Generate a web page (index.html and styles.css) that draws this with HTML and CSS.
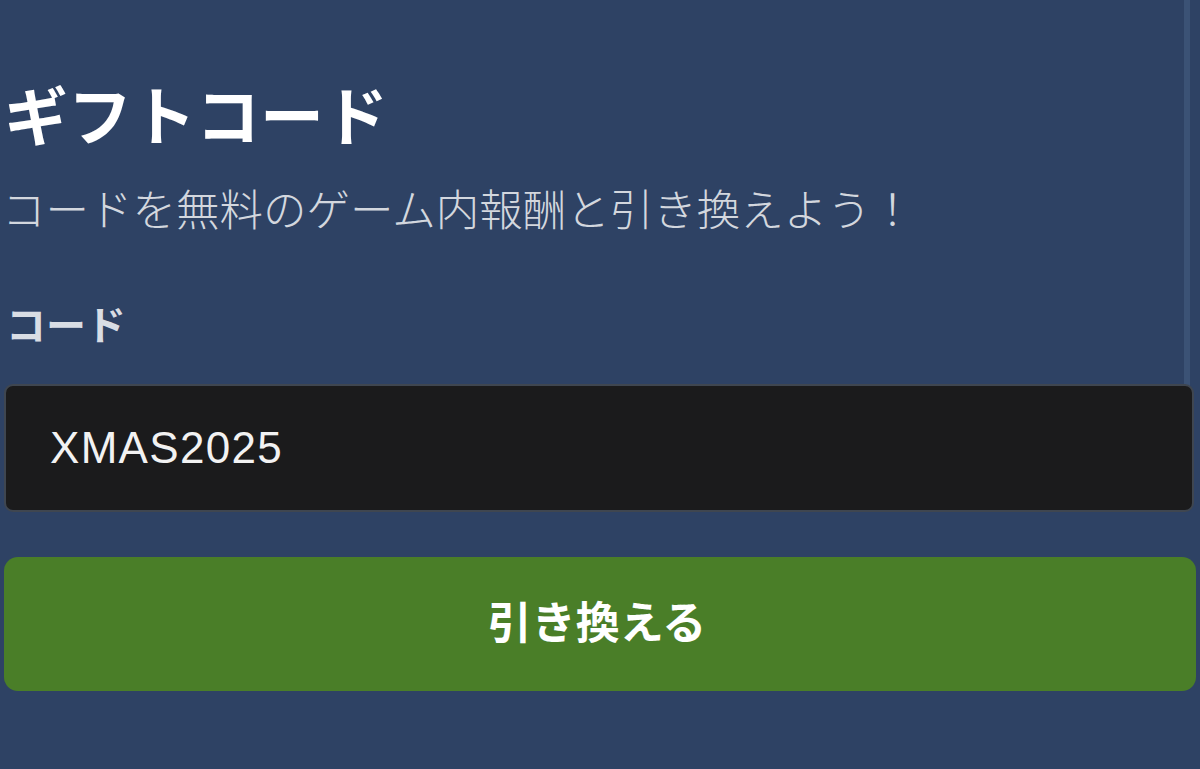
FILE: index.html
```html
<!DOCTYPE html>
<html lang="ja">
<head>
<meta charset="utf-8">
<title>ギフトコード</title>
<link rel="stylesheet" href="styles.css">
</head>
<body>
<div class="scroll-track"></div>
<main class="page">
  <h1 class="title">ギフトコード</h1>
  <p class="subtitle">コードを無料のゲーム内報酬と引き換えよう！</p>
  <label class="label" for="code">コード</label>
  <div class="input-box"><input id="code" class="input" type="text" value="XMAS2025"></div>
  <button class="redeem" type="button">引き換える</button>
</main>
</body>
</html>
```

FILE: styles.css
```css
html, body {
  margin: 0;
  padding: 0;
  background: #2e4264;
  height: 100%;
  overflow: hidden;
}
body {
  font-family: "Noto Sans CJK JP", "Noto Sans", sans-serif;
  position: relative;
}
.scroll-track {
  position: absolute;
  top: 0;
  left: 1184px;
  width: 6px;
  height: 470px;
  background: #3b5275;
}
.page {
  display: flex;
  flex-direction: column;
  padding: 80px 6px 0 4px;
}
.title {
  margin: 0;
  font-size: 64px;
  line-height: 1;
  font-weight: 700;
  color: #ffffff;
}
.subtitle {
  margin: 42px 0 0 -2px;
  font-size: 43.5px;
  line-height: 1;
  font-weight: 300;
  color: #d3d7de;
}
.label {
  margin: 73px 0 0 2px;
  font-size: 40px;
  line-height: 1;
  font-weight: 700;
  color: #d9dde4;
}
.input-box {
  margin-top: 41px;
  position: relative;
  z-index: 1;
}
.input {
  box-sizing: border-box;
  width: 100%;
  height: 128px;
  margin: 0;
  padding: 0 0 0 44px;
  background: #1b1b1c;
  border: 2px solid #3f4650;
  border-radius: 9px;
  color: #f2f2f2;
  font-family: "Liberation Sans", "DejaVu Sans", sans-serif;
  font-size: 44px;
  letter-spacing: 1.3px;
  outline: none;
}
.redeem {
  margin-top: 45px;
  margin-right: -2px;
  height: 134px;
  border: none;
  border-radius: 14px;
  background: #4a7e28;
  color: #ffffff;
  font-family: "Noto Sans CJK JP", "Noto Sans", sans-serif;
  font-size: 44px;
  font-weight: 700;
  cursor: pointer;
  padding: 0 6px 8px 0;
}
```
